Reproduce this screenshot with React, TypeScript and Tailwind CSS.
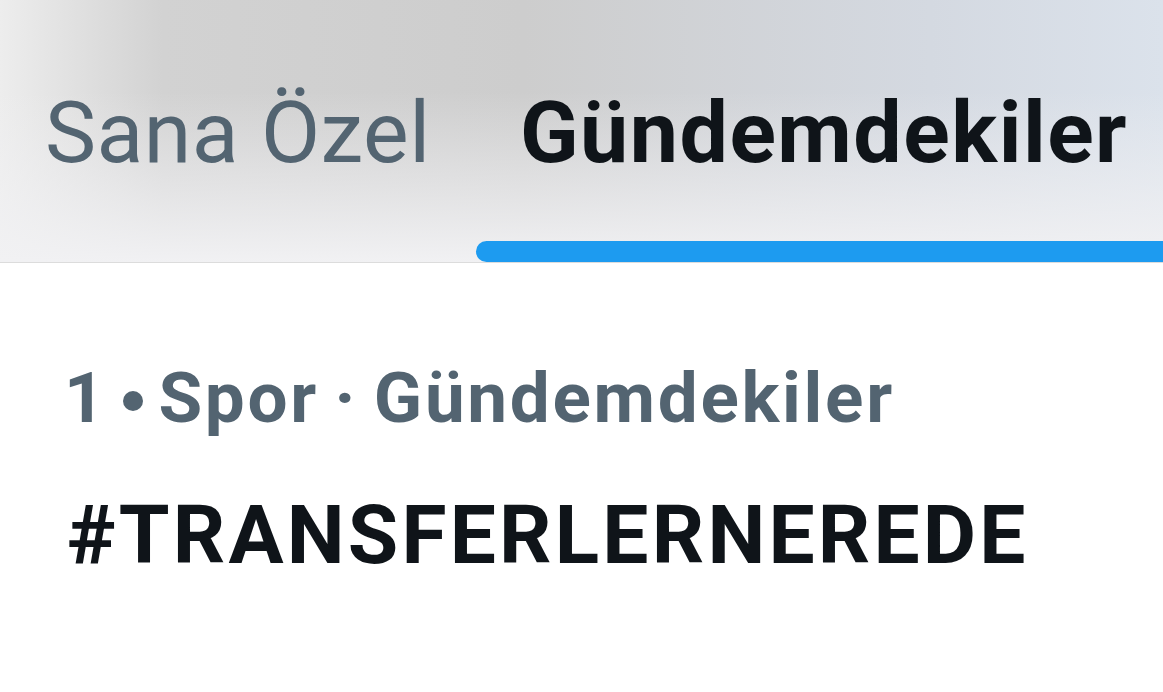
import React from 'react';

const font = { fontFamily: 'Roboto, "Liberation Sans", Arial, sans-serif' };

export default function App() {
  return (
    <div className="w-[1163px] h-[692px] bg-white overflow-hidden" style={font}>
      {/* Tabs header */}
      <header className="h-[263px] flex border-b border-[#dcdcdc] bg-[linear-gradient(to_bottom,rgba(240,240,242,0)_35%,#f1f1f3_100%),linear-gradient(to_right,#ededed_0%,#d2d2d2_14%,#cdcdcd_45%,#d4d9e1_80%,#dbe2eb_100%)]">
        <div className="w-[476px] pl-[45px] pt-[90px]">
          <span className="text-[86px] leading-none tracking-[0.5px] text-[#536471]">Sana Özel</span>
        </div>
        <div className="flex-1 flex flex-col pt-[90px]">
          <span className="pl-[44px] text-[86px] leading-none font-bold tracking-[1.5px] text-[#0f1419]">
            Gündemdekiler
          </span>
          <div className="mt-auto h-[21px] bg-[#1d9bf0] rounded-l-full" />
        </div>
      </header>

      {/* Trend item */}
      <section className="pt-[99px] flex flex-col gap-[61px]">
        <div className="pl-[64px] text-[71px] leading-none font-bold tracking-[2.7px] text-[#536471] [word-spacing:-5px]">
          1
          <span className="inline-block w-[20px] h-[20px] rounded-full bg-[#536471] ml-[16px] mr-[15px] mb-[11px]" />
          Spor · Gündemdekiler
        </div>
        <div className="pl-[67px] text-[82px] leading-none font-bold tracking-[3.2px] text-[#0f1419]">
          #TRANSFERLERNEREDE
        </div>
      </section>
    </div>
  );
}
